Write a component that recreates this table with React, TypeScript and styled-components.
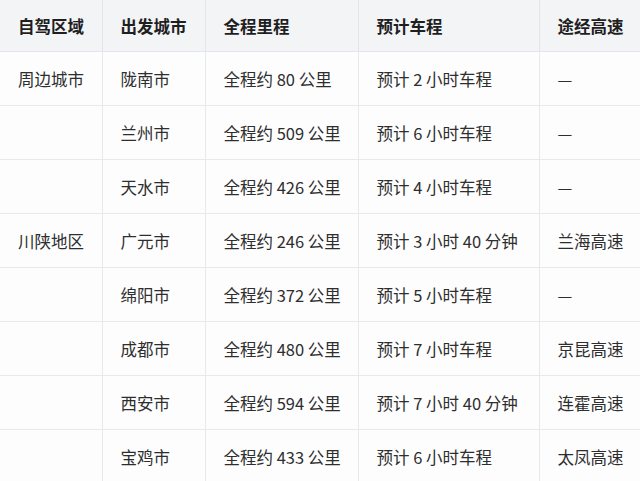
import React from 'react';
import styled, { createGlobalStyle } from 'styled-components';

type route = { region: string, city: string, distance: string, duration: string, highway: string }

const routes: route[] = [
    { region: '周边城市', city: '陇南市', distance: '全程约 80 公里', duration: '预计 2 小时车程', highway: '—' },
    { region: '', city: '兰州市', distance: '全程约 509 公里', duration: '预计 6 小时车程', highway: '—' },
    { region: '', city: '天水市', distance: '全程约 426 公里', duration: '预计 4 小时车程', highway: '—' },
    { region: '川陕地区', city: '广元市', distance: '全程约 246 公里', duration: '预计 3 小时 40 分钟', highway: '兰海高速' },
    { region: '', city: '绵阳市', distance: '全程约 372 公里', duration: '预计 5 小时车程', highway: '—' },
    { region: '', city: '成都市', distance: '全程约 480 公里', duration: '预计 7 小时车程', highway: '京昆高速' },
    { region: '', city: '西安市', distance: '全程约 594 公里', duration: '预计 7 小时 40 分钟', highway: '连霍高速' },
    { region: '', city: '宝鸡市', distance: '全程约 433 公里', duration: '预计 6 小时车程', highway: '太凤高速' },
];

const columns = [
    { title: '自驾区域', width: 102 },
    { title: '出发城市', width: 103 },
    { title: '全程里程', width: 153 },
    { title: '预计车程', width: 181 },
    { title: '途经高速', width: 101 },
];

const GlobalStyle = createGlobalStyle`
    body {
        margin: 0;
        background: #fdfdfe;
        font-family: "Noto Sans CJK SC", "Noto Sans", sans-serif;
    }
`;

const Table = styled.table`
    width: 640px;
    table-layout: fixed;
    border-collapse: collapse;
    background: #fdfdfe;
`;

const HeadCell = styled.th`
    height: 51px;
    padding: 0 0 0 18px;
    text-align: left;
    font-size: 16.5px;
    font-weight: 700;
    color: #1f1f1f;
    background: #f3f4f6;
    border: 1px solid #e3e5e8;
    border-top: none;
    &:first-child { border-left: none; }
`;

const Cell = styled.td`
    height: 53px;
    padding: 0 0 0 18px;
    font-size: 16.5px;
    font-weight: 400;
    color: #2e2e2e;
    white-space: nowrap;
    border: 1px solid #e8e9ec;
    &:first-child { border-left: none; }
`;

const App = () => {
    return <>
        <GlobalStyle />
        <Table>
            <colgroup>
                {columns.map(({ title, width }) => <col key={title} style={{ width }} />)}
            </colgroup>
            <thead>
                <tr>
                    {columns.map(({ title }) => <HeadCell key={title}>{title}</HeadCell>)}
                </tr>
            </thead>
            <tbody>
                {routes.map((r) => <tr key={r.city}>
                    <Cell>{r.region}</Cell>
                    <Cell>{r.city}</Cell>
                    <Cell>{r.distance}</Cell>
                    <Cell>{r.duration}</Cell>
                    <Cell>{r.highway}</Cell>
                </tr>)}
            </tbody>
        </Table>
    </>
}

export default App;
